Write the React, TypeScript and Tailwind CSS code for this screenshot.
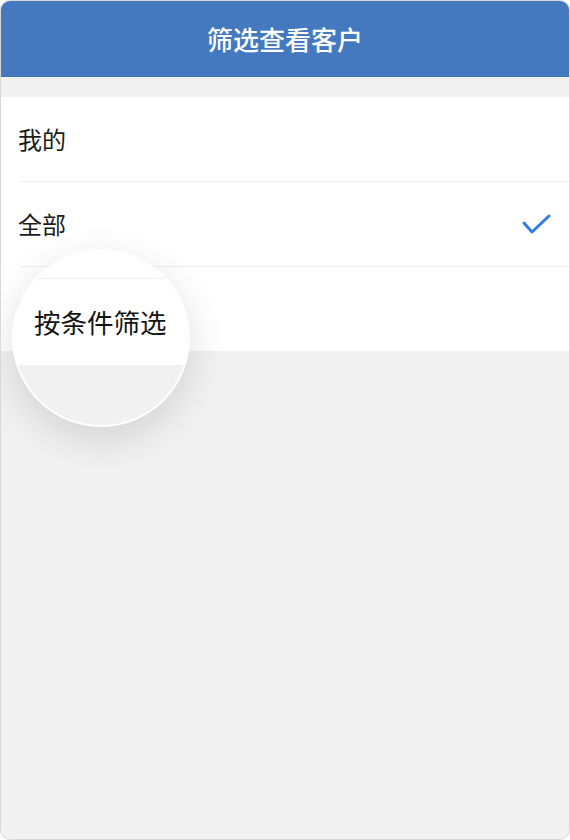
import { ReactNode } from 'react';

const font = { fontFamily: '"Noto Sans CJK SC", "Noto Sans", sans-serif' };

function Row({ label, right }: { label: string; right?: ReactNode }) {
  return (
    <div className="h-[84px] flex items-center justify-between pl-[17px] pr-[18px] bg-white">
      <span className="text-[24px] text-[#1c1c1c] leading-none">{label}</span>
      {right}
    </div>
  );
}

function Divider() {
  return (
    <div className="bg-white">
      <div className="ml-[19px] h-px bg-[#eeeeee]" />
    </div>
  );
}

function Check() {
  return (
    <svg width="30" height="24" viewBox="0 0 30 24">
      <polyline points="3,11 11,20 28,4" fill="none" stroke="#2e7fe0" strokeWidth="3" strokeLinecap="round" strokeLinejoin="round" />
    </svg>
  );
}

export default function App() {
  return (
    <div style={font} className="w-[570px] h-[840px] bg-white">
      <div className="relative w-[570px] h-[840px] rounded-[10px] border border-[#d8d8d8] bg-[#f1f1f1] overflow-hidden flex flex-col">
        <div className="h-[76px] bg-[#4479bf] border-b border-[#3f72b3] flex items-center justify-center">
          <span className="text-white text-[26px] font-medium">筛选查看客户</span>
        </div>
        <div className="h-[20px]" />
        <Row label="我的" />
        <Divider />
        <Row label="全部" right={<Check />} />
        <Divider />
        <Row label="按条件筛选" />

        {/* magnifier */}
        <div className="absolute left-[11px] top-[248px] w-[178px] h-[178px] rounded-full border-2 border-white shadow-[0_12px_40px_rgba(0,0,0,0.13)] overflow-hidden bg-[#f1f1f1] flex flex-col">
          <div className="h-[27px] bg-white" />
          <div className="h-px bg-[#f0f0f0]" />
          <div className="h-[86px] bg-white flex items-center pl-[20px]">
            <span className="text-[26.5px] text-[#141414] leading-none">按条件筛选</span>
          </div>
        </div>
      </div>
    </div>
  );
}
